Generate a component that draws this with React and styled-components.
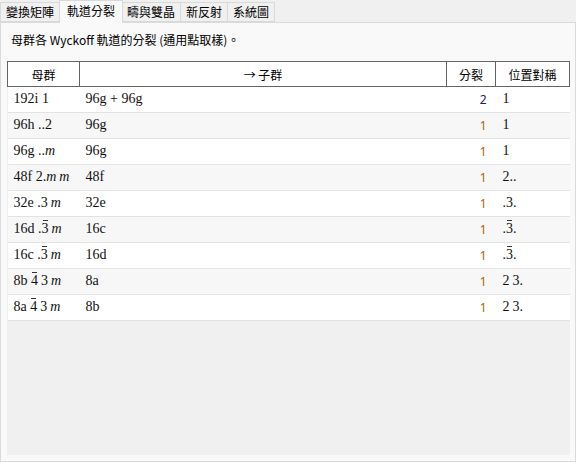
import React from "react";
import styled, { createGlobalStyle } from "styled-components";

const Global = createGlobalStyle`
  html, body { margin: 0; padding: 0; background: #f0f0f0; }
  body { font-family: "Noto Sans CJK TC", "Noto Sans", sans-serif; }
`;

const Window = styled.div`
  width: 576px;
  height: 462px;
  background: #f0f0f0;
  display: flex;
  flex-direction: column;
  overflow: hidden;
`;

const TabBar = styled.div`
  display: flex;
  align-items: flex-end;
  height: 22px;
  position: relative;
  z-index: 1;
`;

const Tab = styled.div`
  box-sizing: border-box;
  height: ${(p) => (p.$active ? "23px" : "20px")};
  padding: 0 ${(p) => (p.$active ? "7px" : "5px")};
  margin: ${(p) => (p.$active ? "0 -1px -1px" : "0")};
  border: 1px solid #d9d9d9;
  border-bottom: ${(p) => (p.$active ? "none" : "1px solid #d9d9d9")};
  margin-left: ${(p) => (p.$first ? "0" : "-1px")};
  background: ${(p) => (p.$active ? "#f9f9f9" : "#f0f0f0")};
  font-size: 12px;
  line-height: ${(p) => (p.$active ? "20px" : "18px")};
  color: #000;
  white-space: nowrap;
  position: relative;
  z-index: ${(p) => (p.$active ? 2 : 1)};
`;

const Panel = styled.div`
  flex: 1;
  box-sizing: border-box;
  border: 1px solid #dadada;
  background: #f9f9f9;
  display: flex;
  flex-direction: column;
  padding: 0 5px 6px 6px;
  min-height: 0;
`;

const Caption = styled.div`
  font-size: 12px;
  line-height: 16px;
  color: #000;
  padding: 9px 0 0 4px;
  height: 38px;
  box-sizing: border-box;
`;

const Scroller = styled.div`
  flex: 1;
  background: #f0f0f0;
  overflow: hidden;
`;

const Table = styled.table`
  width: 562px;
  border-collapse: collapse;
  table-layout: fixed;
`;

const Head = styled.th`
  box-sizing: border-box;
  height: 25px;
  padding: 0;
  border: 1px solid #646464;
  background: #fff;
  font-weight: normal;
  font-size: 12px;
  color: #000;
  text-align: center;
  vertical-align: middle;
`;

const Row = styled.tr`
  background: ${(p) => (p.$odd ? "#f7f7f7" : "#ffffff")};
`;

const Cell = styled.td`
  box-sizing: border-box;
  height: 26px;
  padding: 0 ${(p) => p.$pr || "0"} 1px ${(p) => p.$pl || "0"};
  border-bottom: 1px solid #e3e3e3;
  font-family: "Liberation Serif", "DejaVu Serif", serif;
  font-size: 14px;
  color: #111;
  text-align: ${(p) => p.$align || "left"};
  vertical-align: middle;
  white-space: nowrap;
`;

const Count = styled.span`
  font-family: "Noto Sans", "Open Sans", sans-serif;
  font-size: 12px;
  color: ${(p) => (p.$multi ? "#22205a" : "#a86400")};
`;

const Glyph = styled.span`
  display: inline-block;
  margin-left: ${(p) => (p.$gap ? "3px" : "0")};
  font-style: ${(p) => (p.$italic ? "italic" : "normal")};
  position: relative;
  &::before {
    content: "";
    display: ${(p) => (p.$bar ? "block" : "none")};
    position: absolute;
    left: 1px;
    right: 1px;
    top: -1px;
    border-top: 1px solid #333;
  }
`;

// Renders a site-symmetry symbol: "~" marks an overbar on the next digit,
// "m" is set in italic, and symmetry directions are spaced unless a dot separates them.
function Symbol({ text }) {
  const out = [];
  let prev = null;
  for (let i = 0; i < text.length; i++) {
    let ch = text[i];
    let bar = false;
    if (ch === "~") {
      bar = true;
      i++;
      ch = text[i];
    }
    const gap = prev !== null && prev !== "." && ch !== ".";
    out.push(
      <Glyph key={i} $bar={bar} $italic={ch === "m"} $gap={gap}>
        {ch}
      </Glyph>
    );
    prev = ch;
  }
  return <>{out}</>;
}

const tabs = ["變換矩陣", "軌道分裂", "疇與雙晶", "新反射", "系統圖"];

const rows = [
  { orbit: "192i", sym: "1", split: "96g + 96g", n: 2, site: "1" },
  { orbit: "96h", sym: "..2", split: "96g", n: 1, site: "1" },
  { orbit: "96g", sym: "..m", split: "96g", n: 1, site: "1" },
  { orbit: "48f", sym: "2.mm", split: "48f", n: 1, site: "2.." },
  { orbit: "32e", sym: ".3m", split: "32e", n: 1, site: ".3." },
  { orbit: "16d", sym: ".~3m", split: "16c", n: 1, site: ".~3." },
  { orbit: "16c", sym: ".~3m", split: "16d", n: 1, site: ".~3." },
  { orbit: "8b", sym: "~43m", split: "8a", n: 1, site: "23." },
  { orbit: "8a", sym: "~43m", split: "8b", n: 1, site: "23." },
];

export default function App() {
  return (
    <Window>
      <Global />
      <TabBar>
        {tabs.map((t, i) => (
          <Tab key={t} $active={i === 1} $first={i === 0}>
            {t}
          </Tab>
        ))}
      </TabBar>
      <Panel>
        <Caption>母群各 Wyckoff 軌道的分裂 (通用點取樣)。</Caption>
        <Scroller>
          <Table>
            <colgroup>
              <col style={{ width: 72 }} />
              <col style={{ width: 367 }} />
              <col style={{ width: 49 }} />
              <col style={{ width: 74 }} />
            </colgroup>
            <thead>
              <tr>
                <Head>母群</Head>
                <Head>→ 子群</Head>
                <Head>分裂</Head>
                <Head>位置對稱</Head>
              </tr>
            </thead>
            <tbody>
              {rows.map((r, i) => (
                <Row key={r.orbit} $odd={i % 2 === 1}>
                  <Cell $pl="6px">
                    {r.orbit} <Symbol text={r.sym} />
                  </Cell>
                  <Cell $pl="6px">{r.split}</Cell>
                  <Cell $align="right" $pr="9px">
                    <Count $multi={r.n > 1}>{r.n}</Count>
                  </Cell>
                  <Cell $pl="7px">
                    <Symbol text={r.site} />
                  </Cell>
                </Row>
              ))}
            </tbody>
          </Table>
        </Scroller>
      </Panel>
    </Window>
  );
}
